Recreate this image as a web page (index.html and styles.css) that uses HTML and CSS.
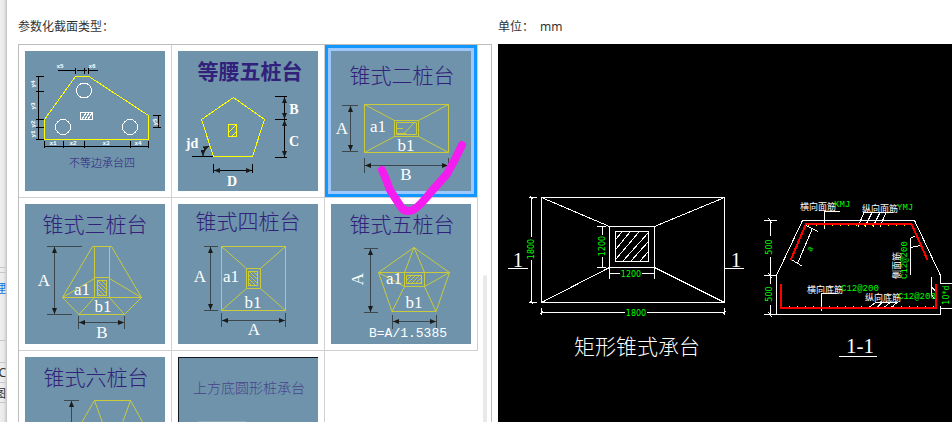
FILE: index.html
```html
<!DOCTYPE html>
<html lang="zh-CN">
<head>
  <meta charset="UTF-8">
  <meta name="viewport" content="width=device-width, initial-scale=1.0">
  <title>参数化截面类型</title>
  <link rel="stylesheet" href="styles.css">
</head>
<body>
  <svg class="defs" aria-hidden="true">
    <defs>
      <marker id="arrow" viewBox="0 0 6 5" refX="6" refY="2.5" markerWidth="6" markerHeight="5" markerUnits="userSpaceOnUse" orient="auto-start-reverse">
        <path d="M0 0L6 2.5L0 5z" fill="#1a1a1a"></path>
      </marker>
      <pattern id="hatch" width="4" height="4" patternUnits="userSpaceOnUse">
        <path d="M-1 5L5 -1" stroke="#c3c545" stroke-width="1"></path>
      </pattern>
      <pattern id="hatch-back" width="4" height="4" patternUnits="userSpaceOnUse">
        <path d="M-1 -1L5 5" stroke="#c3c545" stroke-width="1"></path>
      </pattern>
    </defs>
  </svg>

  <div class="app">
    <aside class="backdrop">
      <div class="strip strip-top"></div>
      <div class="strip strip-gap"></div>
      <div class="strip strip-link"><span>理</span></div>
      <div class="strip strip-mid"></div>
      <div class="strip strip-row"><span>C</span></div>
      <div class="strip strip-row"><span>图</span></div>
    </aside>

    <main class="dialog">
      <section class="types">
        <h2 class="heading">参数化截面类型：</h2>
        <div class="picker">
          <ul class="grid">
            <li class="cell">
              <button class="thumb" type="button" aria-label="不等边承台四">
                <svg viewBox="0 0 140 140">
                  <path class="bright" d="M19.5 68.5L50.5 25.5H64L123.5 64.5V88.5H19.5z"></path>
                  <g class="white">
                    <circle cx="59" cy="39.5" r="7.5"></circle>
                    <circle cx="38" cy="76" r="7.5"></circle>
                    <circle cx="105" cy="76" r="7.5"></circle>
                    <path d="M55.5 61.5h12v7h-12zM57 68l4-6M60 68l4-6M63 68l4-6"></path>
                  </g>
                  <path class="black" d="M33 19.5H50M52 19.5H62M64 19.5H73M50.5 17v6M59.5 17v6M63.5 17v6M13.5 26V88M11 25.5h8M11 40.5h8M11 68.5h8M11 76.5h8M11 88.5h8M20 95.5H123M19.5 90v7M38.5 90v7M59.5 90v7M105.5 90v7M123.5 90v7M133.5 65V76M128 64.5h8M128 76.5h8"></path>
                  <g class="tiny">
                    <text x="35" y="15">x5</text>
                    <text x="67" y="15">x6</text>
                    <text x="28" y="92">x1</text>
                    <text x="48" y="92">x2</text>
                    <text x="81" y="92">x3</text>
                    <text x="113" y="92">x4</text>
                    <text transform="translate(8 33) rotate(-90)">y4</text>
                    <text transform="translate(8 55) rotate(-90)">y3</text>
                    <text transform="translate(8 73) rotate(-90)">y2</text>
                    <text transform="translate(8 83) rotate(-90)">y1</text>
                    <text transform="translate(130 71) rotate(-90)">y5</text>
                  </g>
                  <text class="name name-small" x="77" y="112">不等边承台四</text>
                </svg>
              </button>
            </li>
            <li class="cell">
              <button class="thumb" type="button" aria-label="等腰五桩台">
                <svg viewBox="0 0 140 140">
                  <text class="name name-bold" x="72" y="21">等腰五桩台</text>
                  <path class="bright" d="M55.5 46.5L86.5 68.5L74.5 105.5H35.5L23.5 68.5zM50.5 73.5h8v12h-8zM51 81l7-7M54 85l4-4"></path>
                  <path class="black" d="M97 45.5h12M97 68.5h12M97 106.5h12M35.5 113v9M74.5 113v9M14 105.5H35"></path>
                  <path class="black dim" d="M106.5 46V68"></path>
                  <path class="black dim" d="M106.5 69V106"></path>
                  <path class="black dim" d="M36 119.5H74"></path>
                  <path class="black dim" d="M25 105Q25 98 31 95"></path>
                  <g class="bold-label">
                    <text x="116" y="58">B</text>
                    <text x="116" y="90">C</text>
                    <text x="54" y="130">D</text>
                    <text x="14" y="92">jd</text>
                  </g>
                </svg>
              </button>
            </li>
            <li class="cell selected">
              <button class="thumb" type="button" aria-label="锥式二桩台" aria-pressed="true">
                <svg viewBox="0 0 140 140">
                  <text class="name" x="71" y="25">锥式二桩台</text>
                  <path class="yellow" d="M33.5 53.5h84v48h-84zM63.5 69.5h24v16h-24zM65.5 71.5h20v12h-20zM33.5 53.5l30 16M117.5 53.5l-30 16M33.5 101.5l30-16M117.5 101.5l-30-16M66 77.5h6M72.5 83L83 72M66 82.5h9"></path>
                  <path class="ink" d="M11 54.5h16M11 100.5h16M33.5 107v15M117.5 107v15"></path>
                  <path class="ink dim" d="M19.5 55V100"></path>
                  <path class="ink dim" d="M34 114.5H117"></path>
                  <g class="label">
                    <text x="11" y="77">A</text>
                    <text x="47" y="75">a1</text>
                    <text x="75" y="94">b1</text>
                    <text x="75" y="123">B</text>
                  </g>
                </svg>
              </button>
              <svg class="tick" viewBox="0 0 152 172" aria-hidden="true">
                <path d="M57 125Q60 131 65 145L76 162Q80 168 88 165Q94 162 106 147L122 129Q130 115 137 100"></path>
              </svg>
            </li>
            <li class="cell">
              <button class="thumb" type="button" aria-label="锥式三桩台">
                <svg viewBox="0 0 140 140">
                  <text class="name" x="70" y="21">锥式三桩台</text>
                  <path class="yellow" d="M67.5 42.5h19L116.5 93.5L99.5 110.5H54L37.5 93.5zM69.5 42.5v51M84.5 42.5v51M69.5 73.5h15M37.5 93.5h79M37.5 93.5l32-19M116.5 93.5l-32-19M69.5 93.5L54 110.5M84.5 93.5l15 17"></path>
                  <rect class="yellow" x="72.5" y="76.5" width="9" height="15" fill="url(#hatch-back)"></rect>
                  <path class="ink" d="M22 42.5h35M22 110.5h25M53.5 112v13M99.5 112v13"></path>
                  <path class="ink dim" d="M29.5 43V110"></path>
                  <path class="ink dim" d="M54 118.5H99"></path>
                  <g class="label">
                    <text x="19" y="76">A</text>
                    <text x="57" y="85">a1</text>
                    <text x="78" y="102">b1</text>
                    <text x="77" y="128">B</text>
                  </g>
                </svg>
              </button>
            </li>
            <li class="cell">
              <button class="thumb" type="button" aria-label="锥式四桩台">
                <svg viewBox="0 0 140 140">
                  <text class="name" x="70" y="18">锥式四桩台</text>
                  <path class="yellow" d="M43.5 42.5h64v64h-64zM68.5 64.5h14v20h-14zM43.5 42.5l25 22M107.5 42.5l-25 22M43.5 106.5l25-22M107.5 106.5l-25-22"></path>
                  <rect class="yellow" x="70.5" y="67.5" width="9" height="14" fill="url(#hatch-back)"></rect>
                  <path class="ink" d="M26 42.5h14M26 106.5h14M43.5 109v14M107.5 109v14"></path>
                  <path class="ink dim" d="M32.5 43V106"></path>
                  <path class="ink dim" d="M44 116.5H107"></path>
                  <g class="label">
                    <text x="22" y="72">A</text>
                    <text x="53" y="72">a1</text>
                    <text x="75" y="98">b1</text>
                    <text x="76" y="125">A</text>
                  </g>
                </svg>
              </button>
            </li>
            <li class="cell">
              <button class="thumb" type="button" aria-label="锥式五桩台">
                <svg viewBox="0 0 140 140">
                  <text class="name" x="71" y="21">锥式五桩台</text>
                  <path class="yellow" d="M83 43.5L118.5 68.5L105 107.5H61L47.5 68.5zM47.5 68.5h71M73.5 68.5h20v14h-20zM83 43.5l-9.5 25M83 43.5l10.5 25M47.5 68.5l26 14M118.5 68.5l-25 14M61 107.5l12.5-25M105 107.5l-11.5-25"></path>
                  <rect class="yellow" x="75.5" y="71.5" width="15" height="8" fill="url(#hatch)"></rect>
                  <path class="ink" d="M33 44.5h14M33 108.5h14M61.5 111v14M105.5 111v14"></path>
                  <path class="ink dim" d="M39.5 45V108"></path>
                  <path class="ink dim" d="M62 117.5H105"></path>
                  <g class="label">
                    <text transform="translate(26 75) rotate(-90)">A</text>
                    <text x="63" y="74">a1</text>
                    <text x="83" y="98">b1</text>
                    <text class="formula" x="77" y="129">B=A/1.5385</text>
                  </g>
                </svg>
              </button>
            </li>
            <li class="cell">
              <button class="thumb" type="button" aria-label="锥式六桩台">
                <svg viewBox="0 0 140 140">
                  <text class="name" x="71" y="21">锥式六桩台</text>
                  <path class="yellow" d="M69.5 43.5h36L127 82L105.5 120h-36L47 82zM69.5 43.5L82 78M105.5 43.5L93 78"></path>
                  <path class="ink" d="M39 43.5h15M39 120.5h15"></path>
                  <path class="ink dim" d="M46.5 44V120"></path>
                  <g class="label">
                    <text x="34" y="82">A</text>
                  </g>
                </svg>
              </button>
            </li>
            <li class="cell">
              <button class="thumb thumb-edge" type="button" aria-label="上方底圆形桩承台">
                <svg viewBox="0 0 140 140">
                  <text class="name name-medium" x="71" y="31">上方底圆形桩承台</text>
                  <path class="faint" d="M20 64.5H68"></path>
                </svg>
              </button>
            </li>
          </ul>
          <div class="scroll"><div class="scroll-bar"></div></div>
        </div>
      </section>

      <section class="preview">
        <h2 class="heading">单位：<span class="unit">mm</span></h2>
        <div class="canvas">
          <svg viewBox="0 0 454 378" preserveAspectRatio="xMinYMin meet">
            <!-- plan -->
            <g class="white">
              <path d="M43.5 153.5h183v105h-183zM111.5 182.5h45v41h-45zM117.5 187.5h33v30h-33zM43.5 153.5l68 29M226.5 153.5l-70 29M43.5 258.5l68-35M226.5 258.5l-70-35"></path>
              <path d="M118 195l6-7M118 205l14-17M118 215l23-27M125 217l25-28M133 217l17-19M142 217l8-9"></path>
              <path d="M33.5 153.5V193M33.5 216V258.5M31 153.5h8M31 258.5h8M32 152l3 3M32 257l3 3"></path>
              <path d="M104.5 182.5V191M104.5 213V223.5M99 182.5h9M99 223.5h9"></path>
              <path d="M111.5 229.5H122M144 229.5H156.5M111.5 224v11M156.5 224v11"></path>
              <path d="M43.5 268.5H127M149 268.5H226.5M43.5 264v7M226.5 264v7M42 270l3-3M225 270l3-3"></path>
              <path d="M10 224.5H30M226.5 224.5H246"></path>
            </g>
            <g class="size">
              <text transform="translate(33 205) rotate(-90)">1800</text>
              <text transform="translate(104 202) rotate(-90)">1200</text>
              <text x="133" y="230">1200</text>
              <text x="138" y="269">1800</text>
            </g>
            <g class="caption">
              <text x="20" y="216">1</text>
              <text x="238" y="216">1</text>
              <text x="139" y="303">矩形锥式承台</text>
              <text x="362" y="302">1-1</text>
            </g>

            <!-- section 1-1 -->
            <g class="white">
              <path d="M442.5 262V270.5H278.5V231.5L304.5 176.5H416.5L442.5 231.5V239.5M442.5 239.5H454M442.5 264.5H454"></path>
              <path d="M272.5 176.5V192M272.5 213V240M272.5 261V270.5M266 176.5h13M266 231.5h13M266 270.5h13M270 174l4 5M270 229l4 5M270 268l4 5"></path>
              <path d="M314 185.5L299.5 219.5M308 181.5l12 6M294 216l10 6"></path>
              <path d="M326.5 185V167.5H342M395 168.5H366L360 182.5M374 168.5l-7 14M382 168.5l-7 14M388 168.5l-6 14"></path>
              <path d="M412.5 231V194.5L417.5 191.5M413 203.5l9-2M433.5 233V252M433.5 243l4 4M433.5 251l3 4"></path>
              <path d="M323.5 266.5V249.5H339M399.5 258.5H377.5L371 263.5M384 258.5l-5 5M392 258.5l-6 5M399 258.5l-6 5"></path>
              <path d="M341 312.5H379"></path>
            </g>
            <g class="rebar">
              <path d="M292.5 216.5L308 180H413.5L429.5 216"></path>
              <path d="M283 240V264H438V239.5"></path>
            </g>
            <path class="dots" d="M310 181.5H412M291 262.5H436"></path>
            <g class="size">
              <text transform="translate(271 203) rotate(-90)">500</text>
              <text transform="translate(271 250) rotate(-90)">500</text>
              <text transform="translate(448 251) rotate(-90)">10*d</text>
              <text transform="translate(312 205) rotate(-65)">a</text>
            </g>
            <g class="note">
              <text x="302" y="162">横向面筋</text>
              <text x="364" y="164">纵向面筋</text>
              <text x="309" y="245">横向底筋</text>
              <text x="367" y="253">纵向底筋</text>
              <text transform="translate(398 235) rotate(-90)">侧面筋</text>
            </g>
            <g class="mark">
              <text x="336" y="161">KMJ</text>
              <text x="399" y="164">YMJ</text>
              <text x="343" y="245">C12@200</text>
              <text x="400" y="253">C12@200</text>
              <text transform="translate(407 235) rotate(-90)">C12@200</text>
            </g>
          </svg>
        </div>
      </section>
    </main>
  </div>
</body>
</html>
```

FILE: styles.css
```css
:root {
  --line: #d0d0d0;
  --frame: #bdbdbd;
  --thumb: #6e93aa;
  --name: #32217a;
  --yellow: #c9cb3c;
  --font-cjk: "Noto Sans", "Noto Sans CJK SC", sans-serif;
  --font-name: "Liberation Serif", "Noto Sans CJK SC", serif;
}

* {
  margin: 0;
  padding: 0;
  box-sizing: border-box;
}

body {
  font-family: var(--font-cjk);
  font-size: 12px;
  color: #333333;
  background-color: #ffffff;
  overflow: hidden;
}

.defs {
  position: absolute;
  width: 0;
  height: 0;
}

.app {
  display: flex;
  height: 100vh;
}

/* window behind the dialog */
.backdrop {
  width: 7px;
  flex: none;
  overflow: hidden;
  background: linear-gradient(to right, #efefef 0, #e8e8e8 4px, #c4c4c4 7px);
}

.strip {
  display: flex;
  justify-content: flex-end;
  align-items: center;
  padding-right: 1px;
  border-bottom: 1px solid #c8c8c8;
}

.strip-top {
  height: 268px;
}

.strip-gap {
  height: 5px;
}

.strip-link {
  height: 68px;
  padding-bottom: 38px;
  color: #1673e0;
}

.strip-mid {
  height: 22px;
}

.strip-row {
  height: 20px;
}

.dialog {
  display: flex;
  flex: 1;
  gap: 6px;
  padding-left: 11px;
  min-width: 0;
}

.types,
.preview {
  display: flex;
  flex-direction: column;
}

.types {
  flex: none;
}

.preview {
  flex: 1;
  min-width: 0;
}

.heading {
  height: 44px;
  padding-top: 17px;
  font-size: 12px;
  font-weight: 400;
  line-height: 20px;
}

.unit {
  margin-left: 6px;
}

.picker {
  display: flex;
  flex: 1;
  min-height: 0;
  overflow: hidden;
  border: 1px solid var(--frame);
  border-bottom: none;
}

.grid {
  display: grid;
  grid-template-columns: repeat(3, 153px);
  grid-auto-rows: 153px;
  list-style: none;
}

.cell {
  position: relative;
  padding: 6px;
  border-right: 1px solid var(--line);
  border-bottom: 1px solid var(--line);
}

.selected {
  z-index: 1;
  box-shadow: inset 0 0 0 3px #1296ff, inset 0 0 0 6px #9cc8ff;
}

.thumb {
  display: block;
  width: 140px;
  height: 140px;
  border: none;
  background-color: var(--thumb);
  cursor: pointer;
}

.thumb-edge {
  box-shadow: inset 1px 1px 0 #101820;
}

.thumb svg {
  display: block;
  width: 100%;
  height: 100%;
}

.tick {
  position: absolute;
  top: 0;
  left: 0;
  width: 152px;
  height: 172px;
  pointer-events: none;
}

.tick path {
  fill: none;
  stroke: #f41df0;
  stroke-width: 8;
  stroke-linecap: round;
  stroke-linejoin: round;
}

.scroll {
  display: flex;
  flex-direction: column;
  justify-content: flex-end;
  width: 13px;
  padding-left: 5px;
}

.scroll-bar {
  width: 4px;
  height: 39%;
  border-radius: 2px 2px 0 0;
  background-color: #e9e9e9;
}

.canvas {
  flex: 1;
  min-height: 0;
  background-color: #000000;
}

.canvas svg {
  display: block;
  width: 100%;
}

/* drawing strokes */
.bright,
.black,
.white,
.ink,
.faint {
  fill: none;
  stroke-width: 1;
}

.bright {
  stroke: #ffff00;
  shape-rendering: crispEdges;
}

.yellow {
  stroke: var(--yellow);
}

path.yellow {
  fill: none;
}

.black {
  stroke: #000000;
}

.white {
  stroke: #ffffff;
  shape-rendering: crispEdges;
}

.ink {
  stroke: #3c474e;
}

.faint {
  stroke: #8aa6b6;
}

.dim {
  marker-start: url(#arrow);
  marker-end: url(#arrow);
}

.rebar {
  fill: none;
  stroke: #ff0000;
  stroke-width: 2;
  shape-rendering: crispEdges;
}

.dots {
  fill: none;
  stroke: #ffff00;
  stroke-width: 1;
  stroke-dasharray: 1 7;
}

/* drawing texts */
text {
  dominant-baseline: central;
  text-anchor: middle;
}

.name {
  font-family: var(--font-name);
  font-size: 21px;
  font-weight: 300;
  fill: var(--name);
}

.name-bold {
  font-weight: 700;
}

.name-small {
  font-size: 11px;
}

.name-medium {
  font-size: 14px;
  fill: #48438a;
}

.label {
  font-family: "Liberation Serif", serif;
  font-size: 17px;
  fill: #ffffff;
}

.formula {
  font-family: "Liberation Mono", monospace;
  font-size: 13px;
}

.bold-label {
  font-family: "Liberation Serif", serif;
  font-size: 14px;
  font-weight: 700;
  fill: #ffffff;
}

.tiny {
  font-family: "Liberation Mono", monospace;
  font-size: 6px;
  font-weight: 700;
  fill: #ffffff;
}

.size {
  font-family: "DejaVu Sans", sans-serif;
  font-size: 8px;
  fill: #00ff00;
}

.caption {
  font-family: var(--font-name);
  font-size: 21px;
  font-weight: 300;
  fill: #ffffff;
}

.note text,
.mark text {
  text-anchor: start;
}

.note {
  font-family: "Noto Sans CJK SC", sans-serif;
  font-size: 9px;
  fill: #ffffff;
}

.mark {
  font-family: "Liberation Mono", monospace;
  font-size: 9px;
  fill: #00ff00;
}
```
